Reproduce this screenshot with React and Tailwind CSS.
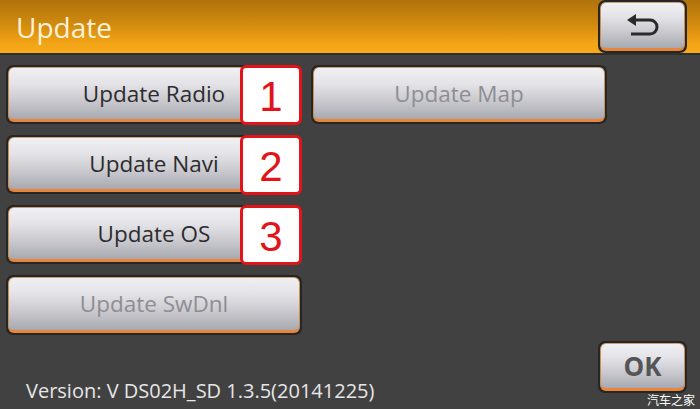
import React from "react";

function Btn({ children, disabled, className = "", textClass = "" }) {
  return (
    <div className={"rounded-[7px] bg-[#262626] p-[2px] " + className}>
      <div className="h-full rounded-[6px] border-t border-x border-b-[3px] border-t-[#c9a27a] border-x-[#c98f55] border-b-[#e8853a] bg-[linear-gradient(to_bottom,#f0f0f3_0%,#e4e4e8_30%,#c4c4ca_70%,#a8a8b0_100%)] flex items-center justify-center">
        <span
          className={
            "font-['Open_Sans',sans-serif] " +
            (disabled ? "text-[#8e8e92] " : "text-[#2c2c2e] ") +
            textClass
          }
        >
          {children}
        </span>
      </div>
    </div>
  );
}

function NumBox({ n }) {
  return (
    <div className="absolute right-0 top-0 w-[62px] h-[60px] rounded-[6px] border-[3px] border-[#e2141a] bg-white flex items-center justify-center">
      <span className="font-['Liberation_Sans',sans-serif] text-[42px] leading-none text-[#e2141a] mt-[4px]">
        {n}
      </span>
    </div>
  );
}

export default function App() {
  return (
    <div className="w-[700px] h-[409px] bg-[#414141] relative overflow-hidden font-['Open_Sans',sans-serif]">
      {/* Header */}
      <div className="h-[55px] bg-[linear-gradient(to_bottom,#b0720a_0%,#d08a0f_45%,#f1a216_80%,#f8aa1a_100%)] border-b-2 border-[#2f2f2f] flex items-center justify-between pl-[16px] pr-[13px]">
        <span className="text-[28px] text-[#fdf1d6] leading-none">Update</span>
        <Btn className="w-[89px] h-[53px] -mt-[1px]">
          <svg width="32" height="24" viewBox="0 0 32 24" className="block mt-[2px]">
            <path d="M0 6 L9 0 L9 12 Z" fill="#2a2a2a" />
            <path
              d="M8 6 H23 A7 7 0 0 1 23 20 H4"
              fill="none"
              stroke="#2a2a2a"
              strokeWidth="3"
            />
          </svg>
        </Btn>
      </div>

      {/* Buttons */}
      <div className="flex gap-[9px] pl-[6px] pt-[10px]">
        <div className="flex flex-col gap-[11px] w-[296px]">
          <div className="relative h-[59px]">
            <Btn className="h-full" textClass="text-[22.5px]">Update Radio</Btn>
            <NumBox n="1" />
          </div>
          <div className="relative h-[59px]">
            <Btn className="h-full" textClass="text-[22.5px]">Update Navi</Btn>
            <NumBox n="2" />
          </div>
          <div className="relative h-[59px]">
            <Btn className="h-full" textClass="text-[22.5px]">Update OS</Btn>
            <NumBox n="3" />
          </div>
          <Btn className="h-[60px]" disabled textClass="text-[22.5px]">Update SwDnl</Btn>
        </div>
        <div className="flex flex-col">
          <Btn className="w-[296px] h-[59px]" disabled textClass="text-[22.5px]">Update Map</Btn>
        </div>
      </div>

      {/* Footer */}
      <div className="absolute left-0 right-0 bottom-0 h-[72px] flex items-end justify-between pl-[26px] pr-[13px]">
        <span className="text-[20px] text-[#e6e6e6] leading-none mb-[8px]">
          Version: V DS02H_SD 1.3.5(20141225)
        </span>
        <Btn className="w-[89px] h-[52px] mb-[16px]" textClass="text-[26px] font-bold !text-[#555557]">
          OK
        </Btn>
      </div>
      <span className="absolute right-[5px] bottom-[3px] text-[12px] leading-none text-white font-['Noto_Sans_CJK_SC',sans-serif]">
        汽车之家
      </span>
    </div>
  );
}
